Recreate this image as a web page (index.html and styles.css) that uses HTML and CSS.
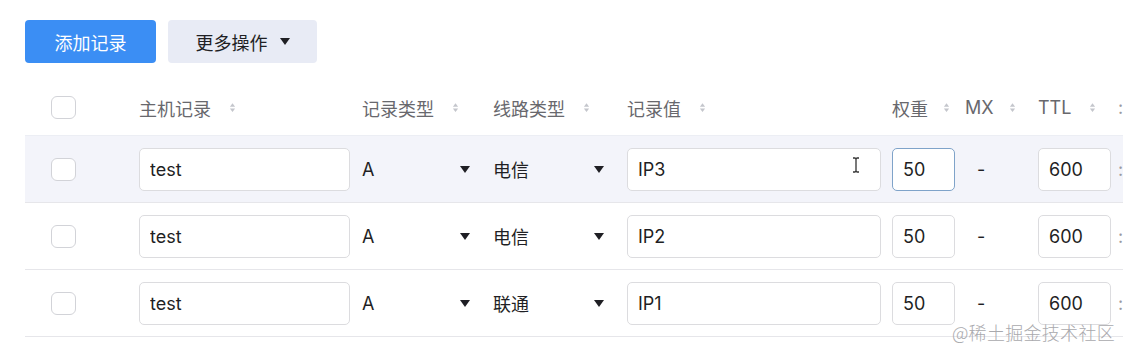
FILE: index.html
```html
<!DOCTYPE html>
<html lang="zh-CN">
<head>
    <meta charset="UTF-8">
    <meta name="viewport" content="width=device-width, initial-scale=1.0">
    <title>解析记录</title>
    <link rel="stylesheet" href="styles.css">
</head>
<body>
    <div class="page">
        <div class="toolbar">
            <button class="btn btn-primary">添加记录</button>
            <button class="btn btn-light">更多操作 <span class="caret"></span></button>
        </div>

        <div class="table">
            <div class="row head">
                <div class="cell check-cell"><span class="checkbox"></span></div>
                <div class="cell">主机记录 <svg class="sort" viewBox="0 0 8 12"><path d="M4 1 L7 5 H1 Z M4 11 L7 7 H1 Z"/></svg></div>
                <div class="cell">记录类型 <svg class="sort" viewBox="0 0 8 12"><path d="M4 1 L7 5 H1 Z M4 11 L7 7 H1 Z"/></svg></div>
                <div class="cell">线路类型 <svg class="sort" viewBox="0 0 8 12"><path d="M4 1 L7 5 H1 Z M4 11 L7 7 H1 Z"/></svg></div>
                <div class="cell">记录值 <svg class="sort" viewBox="0 0 8 12"><path d="M4 1 L7 5 H1 Z M4 11 L7 7 H1 Z"/></svg></div>
                <div class="cell">权重 <svg class="sort sort-tight" viewBox="0 0 8 12"><path d="M4 1 L7 5 H1 Z M4 11 L7 7 H1 Z"/></svg></div>
                <div class="cell">MX <svg class="sort sort-tight" viewBox="0 0 8 12"><path d="M4 1 L7 5 H1 Z M4 11 L7 7 H1 Z"/></svg></div>
                <div class="cell">TTL <svg class="sort" viewBox="0 0 8 12"><path d="M4 1 L7 5 H1 Z M4 11 L7 7 H1 Z"/></svg></div>
                <div class="cell more">:</div>
            </div>

            <div class="row active">
                <div class="cell check-cell"><span class="checkbox"></span></div>
                <div class="cell"><input class="field host" value="test"></div>
                <div class="cell"><div class="select type">A <span class="caret dark"></span></div></div>
                <div class="cell"><div class="select line">电信 <span class="caret dark"></span></div></div>
                <div class="cell cursor-cell">
                    <input class="field value" value="IP3">
                    <svg class="ibeam" viewBox="0 0 8 16"><path d="M1 1 H3 Q4 1 4 3 V13 Q4 15 3 15 H1 M7 1 H5 Q4 1 4 3 M4 13 Q4 15 5 15 H7" fill="none" stroke="#333" stroke-width="1.3"/></svg>
                </div>
                <div class="cell"><input class="field weight focus" value="50"></div>
                <div class="cell dash">-</div>
                <div class="cell"><input class="field ttl" value="600"></div>
                <div class="cell more">:</div>
            </div>

            <div class="row">
                <div class="cell check-cell"><span class="checkbox"></span></div>
                <div class="cell"><input class="field host" value="test"></div>
                <div class="cell"><div class="select type">A <span class="caret dark"></span></div></div>
                <div class="cell"><div class="select line">电信 <span class="caret dark"></span></div></div>
                <div class="cell"><input class="field value" value="IP2"></div>
                <div class="cell"><input class="field weight" value="50"></div>
                <div class="cell dash">-</div>
                <div class="cell"><input class="field ttl" value="600"></div>
                <div class="cell more">:</div>
            </div>

            <div class="row">
                <div class="cell check-cell"><span class="checkbox"></span></div>
                <div class="cell"><input class="field host" value="test"></div>
                <div class="cell"><div class="select type">A <span class="caret dark"></span></div></div>
                <div class="cell"><div class="select line">联通 <span class="caret dark"></span></div></div>
                <div class="cell"><input class="field value" value="IP1"></div>
                <div class="cell"><input class="field weight" value="50"></div>
                <div class="cell dash">-</div>
                <div class="cell"><input class="field ttl" value="600"></div>
                <div class="cell more">:</div>
            </div>
        </div>

        <div class="watermark">@稀土掘金技术社区</div>
    </div>
</body>
</html>
```

FILE: styles.css
```css
:root {
    --primary: #3b8ef4;
    --light-btn: #e8ebf5;
    --text-main: #1f1f24;
    --text-head: #68686d;
    --border: #dcdcdf;
    --row-line: #e6e6ea;
    --row-active: #f3f4fa;
    --sort: #c4c6cc;
}

html, body {
    margin: 0;
    overflow: hidden;
}

body {
    font-family: Inter, "Noto Sans CJK SC", sans-serif;
    color: var(--text-main);
    background: #fff;
}

.page {
    position: relative;
    width: 1123px;
    height: 351px;
    padding: 20px 0 0 25px;
    box-sizing: border-box;
}

.toolbar {
    display: flex;
    gap: 12px;
    margin-bottom: 22px;
}

.btn {
    height: 43px;
    border: none;
    border-radius: 4px;
    font-family: inherit;
    font-size: 18px;
    padding: 0;
    cursor: pointer;
}

.btn-primary {
    width: 131px;
    background: var(--primary);
    color: #fff;
}

.btn-light {
    width: 149px;
    background: var(--light-btn);
    color: var(--text-main);
    display: flex;
    align-items: center;
    justify-content: center;
    gap: 12px;
}

.caret {
    width: 0;
    height: 0;
    border-left: 5px solid transparent;
    border-right: 5px solid transparent;
    border-top: 7px solid #1f1f24;
}

.table {
    width: 1098px;
}

.row {
    display: grid;
    grid-template-columns: 114px 223px 131px 134px 265px 73px 73px 77px 8px;
    align-items: center;
    height: 66px;
    border-bottom: 1px solid var(--row-line);
}

.row.head {
    height: 51px;
    box-sizing: border-box;
    padding-bottom: 5px;
    border-bottom: 1px solid #eceef4;
    color: var(--text-head);
}

.row.active {
    background: var(--row-active);
}

.cell {
    display: flex;
    align-items: center;
    white-space: nowrap;
    font-size: 18px;
}

.check-cell {
    padding-left: 26px;
}

.checkbox {
    width: 23px;
    height: 21px;
    border: 1px solid #d2d3d8;
    border-radius: 6px;
    background: #fff;
}

.sort {
    width: 7px;
    height: 11px;
    fill: var(--sort);
    margin-left: 18px;
}

.sort-tight {
    margin-left: 15px;
}

.field {
    height: 43px;
    box-sizing: border-box;
    border: 1px solid var(--border);
    border-radius: 5px;
    background: #fff;
    padding: 0 10px;
    font-family: inherit;
    font-size: 18px;
    color: var(--text-main);
    outline: none;
}

.field.host { width: 211px; }
.field.value { width: 254px; }
.field.weight { width: 63px; }
.field.ttl { width: 73px; }

.field.focus {
    border-color: #7fa3c9;
}

.select {
    display: flex;
    align-items: center;
    justify-content: space-between;
}

.select.type { width: 108px; }
.select.line { width: 111px; }

.dash {
    padding-left: 12px;
}

.more {
    color: #9a9aa0;
    overflow: hidden;
    padding-left: 3px;
}

.cursor-cell {
    position: relative;
}

.ibeam {
    position: absolute;
    left: 225px;
    top: 50%;
    width: 8px;
    height: 16px;
    margin-top: -12px;
}

.watermark {
    position: absolute;
    right: 8px;
    bottom: 6px;
    font-family: "Noto Sans CJK SC", sans-serif;
    font-weight: 300;
    font-size: 18px;
    color: #a9a9ad;
    letter-spacing: 0.3px;
}
```
